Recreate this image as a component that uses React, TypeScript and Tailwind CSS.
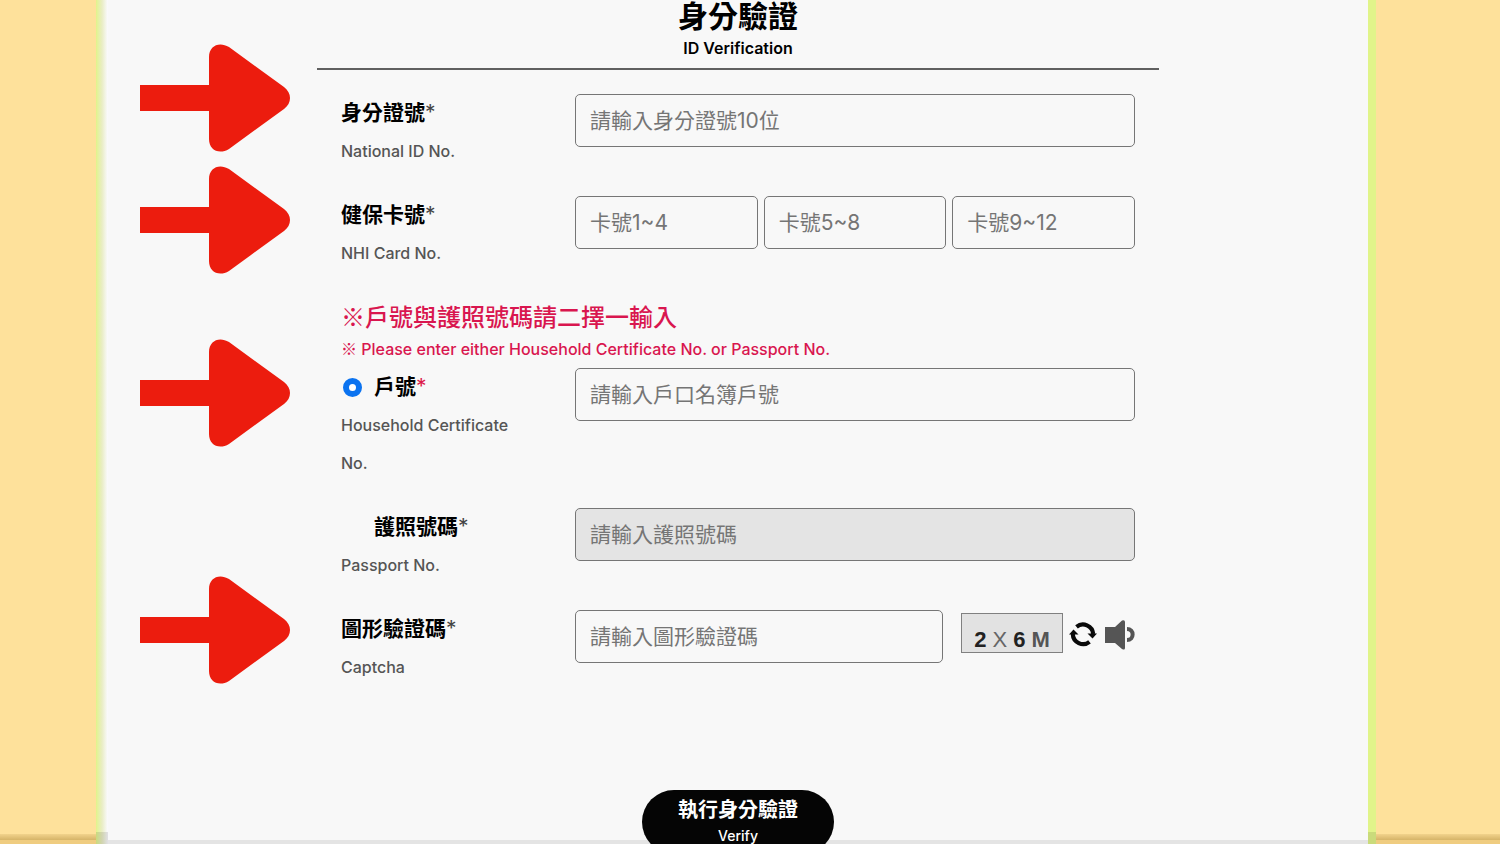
import { useState } from "react";
import type { ReactNode } from "react";

const inputClass =
  "h-[53px] w-full min-w-0 rounded-[5px] border border-[#767676] bg-[#f8f8f8] px-3.5 text-[21px] text-gray-800 placeholder:text-[#757575] disabled:bg-[#e4e4e4]";

const Arrow = ({ className }: { className: string }) => (
  <svg
    className={`absolute left-8 h-[108px] w-[150px] ${className}`}
    viewBox="0 0 150 108"
    fill="#ec1c0e"
    aria-hidden="true"
  >
    <path d="M0 41H69V13C69 2 79 -3 89 3L144 43C152 49 152 59 144 65L89 105C79 111 69 106 69 95V67H0Z" />
  </svg>
);

const RefreshIcon = () => (
  <svg className="h-7 w-7" viewBox="0 0 28 28" fill="none" aria-hidden="true">
    <path d="M7.5 5.8A10.3 10.3 0 0 1 24.2 13" stroke="#0a0a0a" strokeWidth="4.2" />
    <path d="M20.5 20.8A10.3 10.3 0 0 1 3.8 13" stroke="#0a0a0a" strokeWidth="4.2" />
    <path d="M18.5 12.5H28L23.5 17.5Z" fill="#0a0a0a" />
    <path d="M9.5 13.5H0L4.5 8.5Z" fill="#0a0a0a" />
  </svg>
);

const SpeakerIcon = () => (
  <svg className="h-[30px] w-[30px]" viewBox="0 0 30 30" fill="none" aria-hidden="true">
    <path d="M0 7H10L17 0.5Q20 -0.5 20 2V28Q20 30.5 17 29L10 23H0Z" fill="#555" />
    <path d="M22 9C29.5 9 29.5 20 22 20" stroke="#555" strokeWidth="4" />
  </svg>
);

type FieldProps = {
  id: string;
  title: string;
  sub: string;
  red?: boolean;
  radio?: ReactNode;
  children: ReactNode;
};

const Field = ({ id, title, sub, red, radio, children }: FieldProps) => (
  <div className="grid grid-cols-[234px_1fr] items-start">
    <div className="pr-14">
      <div className="flex items-center">
        {radio}
        <label htmlFor={id} className="text-[21px] leading-[38px] font-bold text-black">
          {title}
          <span className={red ? "font-normal text-[#dc1a4a]" : "font-normal text-[#444]"}>*</span>
        </label>
      </div>
      <p className="text-base leading-[38px] font-medium text-[#555]">{sub}</p>
    </div>
    {children}
  </div>
);

const radioClass =
  "ml-0.5 mr-3 h-[19px] w-[19px] shrink-0 appearance-none rounded-full border border-[#767676] bg-white checked:border-[6px] checked:border-[#0b73f0]";

const App = () => {
  const [type, setType] = useState("household");

  return (
    <div
      className={
        "relative flex h-screen overflow-hidden bg-[#fee19b] font-['Inter','Noto_Sans_CJK_TC',sans-serif]"
      }
    >
      {/* left side */}
      <div className="flex w-24 shrink-0 flex-col justify-end">
        <div className="h-1.5 bg-linear-to-b from-[#f2d38c] to-[#d6b468]"></div>
        <div className="h-1 bg-[#efcc80]"></div>
      </div>
      <div className="flex w-3 shrink-0 flex-col justify-end bg-linear-to-r from-[#e1f48a] via-[#e9edc4] to-[#fbfaff]">
        <div className="h-3 bg-black/10"></div>
      </div>

      <main className="relative flex-1 bg-[#f8f8f8]">
        <div className="absolute inset-x-0 bottom-0 h-1 bg-[#e4e4e4]"></div>
        <Arrow className="top-11" />
        <Arrow className="top-[166px]" />
        <Arrow className="top-[339px]" />
        <Arrow className="top-[576px]" />

        <form className="relative mx-auto max-w-[842px]" onSubmit={(e) => e.preventDefault()}>
          <header className="border-b-2 border-[#606060] pb-1 text-center text-black">
            <h1 className="text-[30px] leading-8 font-bold">身分驗證</h1>
            <p className="text-base leading-8 font-semibold">ID Verification</p>
          </header>

          <div className="mt-6 flex flex-col gap-[26px] px-6">
            <Field id="nid" title="身分證號" sub="National ID No.">
              <input id="nid" type="text" placeholder="請輸入身分證號10位" className={inputClass} />
            </Field>

            <Field id="card1" title="健保卡號" sub="NHI Card No.">
              <div className="flex gap-1.5">
                <input id="card1" type="text" placeholder="卡號1~4" className={inputClass} />
                <input type="text" aria-label="卡號5~8" placeholder="卡號5~8" className={inputClass} />
                <input type="text" aria-label="卡號9~12" placeholder="卡號9~12" className={inputClass} />
              </div>
            </Field>

            <div>
              <div className="pb-[5px] text-[#d9164f]">
                <p className="font-['Noto_Sans_CJK_TC',sans-serif] text-2xl leading-9 font-medium">
                  ※戶號與護照號碼請二擇一輸入
                </p>
                <p className="text-base leading-7 font-medium">
                  <span className="font-['Noto_Sans_CJK_TC',sans-serif]">※</span> Please enter either
                  Household Certificate No. or Passport No.
                </p>
              </div>
              <Field
                id="household"
                title="戶號"
                sub="Household Certificate No."
                red
                radio={
                  <input
                    type="radio"
                    name="type"
                    aria-label="戶號"
                    checked={type === "household"}
                    onChange={() => setType("household")}
                    className={radioClass}
                  />
                }
              >
                <input id="household" type="text" placeholder="請輸入戶口名簿戶號" className={inputClass} />
              </Field>
            </div>

            <Field
              id="passport"
              title="護照號碼"
              sub="Passport No."
              radio={
                <input
                  type="radio"
                  name="type"
                  aria-label="護照號碼"
                  checked={type === "passport"}
                  onChange={() => setType("passport")}
                  className={`invisible ${radioClass}`}
                />
              }
            >
              <input
                id="passport"
                type="text"
                placeholder="請輸入護照號碼"
                disabled={type !== "passport"}
                className={inputClass}
              />
            </Field>

            <Field id="captcha" title="圖形驗證碼" sub="Captcha">
              <div className="flex items-center">
                <input id="captcha" type="text" placeholder="請輸入圖形驗證碼" className={inputClass} />
                <div className="mb-2 ml-[18px] flex h-10 w-[102px] shrink-0 items-end justify-center gap-1.5 border border-[#808080] bg-[#e2e2e2] font-['Liberation_Sans',sans-serif] text-[22px] leading-6 font-bold text-[#222]">
                  <span>2</span>
                  <span className="font-normal text-[#666]">X</span>
                  <span>6</span>
                  <span className="text-[#555]">M</span>
                </div>
                <button type="button" aria-label="refresh" className="mb-1 ml-1.5 shrink-0">
                  <RefreshIcon />
                </button>
                <button type="button" aria-label="play audio" className="mb-1 ml-2 shrink-0">
                  <SpeakerIcon />
                </button>
              </div>
            </Field>
          </div>

          <div className="mt-26 flex justify-center">
            <button type="submit" className="w-48 rounded-full bg-[#050505] py-1.5 text-white">
              <span className="block text-xl leading-7 font-bold">執行身分驗證</span>
              <span className="block text-sm leading-6 font-medium">Verify</span>
            </button>
          </div>
        </form>
      </main>

      {/* right side */}
      <div className="flex w-2 shrink-0 flex-col justify-end bg-[#e1f48a]">
        <div className="h-3 bg-black/10"></div>
      </div>
      <div className="flex w-31 shrink-0 flex-col justify-end">
        <div className="h-1.5 bg-linear-to-b from-[#f2d38c] to-[#d6b468]"></div>
        <div className="h-1 bg-[#efcc80]"></div>
      </div>
    </div>
  );
};

export default App;
